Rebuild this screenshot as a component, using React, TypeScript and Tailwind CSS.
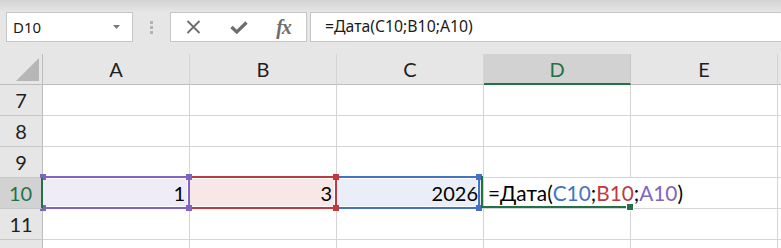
import React from "react";

const GRID = "border-[#d4d4d4]";

function RowHeader({ n, active }: { n: number; active?: boolean }) {
  return active ? (
    <div className="relative z-[5] bg-[#d2d2d2] text-[#217346] border-r-2 border-r-[#217346] border-b border-b-[#c8c8c8] flex items-center justify-center">
      {n}
    </div>
  ) : (
    <div className="bg-[#e6e6e6] text-[#1f1f1f] border-r border-r-[#bdbdbd] border-b border-b-[#c8c8c8] flex items-center justify-center">
      {n}
    </div>
  );
}

function EmptyRow({ n }: { n: number }) {
  return (
    <>
      <RowHeader n={n} />
      <div className={`border-r border-b ${GRID}`} />
      <div className={`border-r border-b ${GRID}`} />
      <div className={`border-r border-b ${GRID}`} />
      <div className={`border-r border-b ${GRID}`} />
      <div className={`border-r border-b ${GRID}`} />
      <div className={`border-b ${GRID}`} />
    </>
  );
}

export default function App() {
  return (
    <div className="w-[781px] h-[248px] overflow-hidden bg-white flex flex-col font-['Lato','Noto_Sans',sans-serif]">
      {/* top strip */}
      <div className="h-[12px] shrink-0 bg-linear-to-b from-[#d3d3d3] to-[#e6e6e6]" />

      {/* formula bar */}
      <div className="h-[30px] shrink-0 bg-[#e6e6e6] flex font-['Noto_Sans','Open_Sans',sans-serif] text-[15px] text-[#1a1a1a]">
        <div className="ml-[6px] w-[127px] bg-white border border-[#c6c6c6] flex items-center justify-between pl-[6px] pr-[12px]">
          <span className="leading-none">D10</span>
          <svg width="7" height="4" viewBox="0 0 7 4">
            <polygon points="0,0 7,0 3.5,4" fill="#7a7a7a" />
          </svg>
        </div>
        <div className="w-[37px] flex flex-col items-center justify-center gap-[2px]">
          <span className="w-[3px] h-[3px] bg-[#b3b3b3]" />
          <span className="w-[3px] h-[3px] bg-[#b3b3b3]" />
          <span className="w-[3px] h-[3px] bg-[#b3b3b3]" />
        </div>
        <div className="w-[137px] bg-white border border-[#c6c6c6] flex items-center">
          <div className="w-[45px] flex items-center justify-center">
            <svg width="15" height="14" viewBox="0 0 15 14">
              <path d="M1.5 1 L13.5 13 M13.5 1 L1.5 13" stroke="#6d6d6d" strokeWidth="1.8" fill="none" />
            </svg>
          </div>
          <div className="w-[45px] flex items-center justify-center">
            <svg width="18" height="13" viewBox="0 0 18 13">
              <path d="M1.5 6 L6.8 11 L16.5 1.5" stroke="#6d6d6d" strokeWidth="3.2" fill="none" />
            </svg>
          </div>
          <div className="w-[45px] flex items-center justify-center">
            <span className="font-['Liberation_Serif',serif] italic font-semibold text-[20px] leading-none text-[#6d6d6d] tracking-[-1px]">
              fx
            </span>
          </div>
        </div>
        <div className="ml-[3px] flex-1 bg-white border border-r-0 border-[#c6c6c6] pl-[14px] flex items-center whitespace-nowrap text-[15.8px]">
          =Дата(C10;B10;A10)
        </div>
      </div>

      <div className="h-[12px] shrink-0 bg-[#e6e6e6]" />

      {/* grid */}
      <div className="grid grid-cols-[43px_147px_147px_147px_147px_147px_1fr] grid-rows-[31px_31px_31px_31px_31px_31px_31px] text-[20px] text-black">
        {/* header row */}
        <div className="bg-[#e6e6e6] border-r border-b border-[#bdbdbd] flex items-end justify-end p-[3px]">
          <svg width="23" height="23" viewBox="0 0 23 23">
            <polygon points="23,0 23,23 0,23" fill="#b6b6b6" />
          </svg>
        </div>
        <div className="bg-[#e6e6e6] text-[#1f1f1f] border-r border-r-[#d4d4d4] border-b border-b-[#bdbdbd] flex items-center justify-center">A</div>
        <div className="bg-[#e6e6e6] text-[#1f1f1f] border-r border-r-[#d4d4d4] border-b border-b-[#bdbdbd] flex items-center justify-center">B</div>
        <div className="bg-[#e6e6e6] text-[#1f1f1f] border-r border-r-[#d4d4d4] border-b border-b-[#bdbdbd] flex items-center justify-center">C</div>
        <div className="bg-[#d2d2d2] text-[#217346] border-r border-r-[#c6c6c6] border-b-2 border-b-[#217346] flex items-center justify-center">D</div>
        <div className="bg-[#e6e6e6] text-[#1f1f1f] border-r border-r-[#d4d4d4] border-b border-b-[#bdbdbd] flex items-center justify-center">E</div>
        <div className="bg-[#e6e6e6] border-b border-b-[#bdbdbd]" />

        <EmptyRow n={7} />
        <EmptyRow n={8} />
        <EmptyRow n={9} />

        {/* row 10 */}
        <RowHeader n={10} active />
        <div className={`relative bg-[#efebf7] border-r border-b ${GRID} flex items-center justify-end pr-[4px]`}>
          <div className="absolute -top-[2px] left-0 -right-[1px] -bottom-[1px] border-2 border-l-0 border-[#8064c4] z-[3]">
            <div className="absolute inset-0 border border-l-0 border-white" />
            <span className="absolute -top-[4px] -right-[4px] w-[6px] h-[6px] bg-[#8064c4]" />
            <span className="absolute -bottom-[4px] -right-[4px] w-[6px] h-[6px] bg-[#8064c4]" />
            <span className="absolute -top-[4px] -left-[3px] w-[6px] h-[6px] bg-[#8064c4]" />
            <span className="absolute -bottom-[4px] -left-[3px] w-[6px] h-[6px] bg-[#8064c4]" />
          </div>
          <span className="relative z-[4]">1</span>
        </div>
        <div className={`relative bg-[#f8e7e7] border-r border-b ${GRID} flex items-center justify-end pr-[4px]`}>
          <div className="absolute -top-[2px] left-0 -right-[1px] -bottom-[1px] border-2 border-l-0 border-[#be3a3f] z-[2]">
            <div className="absolute inset-0 border border-l-0 border-white" />
            <span className="absolute -top-[4px] -right-[4px] w-[6px] h-[6px] bg-[#be3a3f]" />
            <span className="absolute -bottom-[4px] -right-[4px] w-[6px] h-[6px] bg-[#be3a3f]" />
          </div>
          <span className="relative z-[4]">3</span>
        </div>
        <div className={`relative bg-[#e9eef8] border-r border-b ${GRID} flex items-center justify-end pr-[5px]`}>
          <div className="absolute -top-[2px] left-0 right-[3px] -bottom-[1px] border-2 border-l-0 border-[#4472c4] z-[1]">
            <div className="absolute inset-0 border border-l-0 border-white" />
            <span className="absolute -top-[4px] -right-[4px] w-[6px] h-[6px] bg-[#4472c4]" />
            <span className="absolute -bottom-[4px] -right-[4px] w-[6px] h-[6px] bg-[#4472c4]" />
          </div>
          <span className="relative z-[4]">2026</span>
        </div>
        <div className={`relative border-b ${GRID} flex items-center pl-[4px] whitespace-nowrap text-[20.8px]`}>
          <div className="absolute -left-[3px] -top-[2px] right-[1px] bottom-0 border-l-2 border-b-2 border-[#217346] z-[6]">
            <span className="absolute -right-[4px] -bottom-[5px] w-[8px] h-[8px] border border-white bg-[#217346]" />
          </div>
          <span className="relative z-[7]">
            =Дата(<span className="text-[#4472c4]">C10</span>;<span className="text-[#c0393f]">B10</span>;<span className="text-[#8064c4]">A10</span>)
          </span>
        </div>
        <div className={`border-r border-b ${GRID}`} />
        <div className={`border-b ${GRID}`} />

        <EmptyRow n={11} />
        <EmptyRow n={12} />
      </div>
    </div>
  );
}
